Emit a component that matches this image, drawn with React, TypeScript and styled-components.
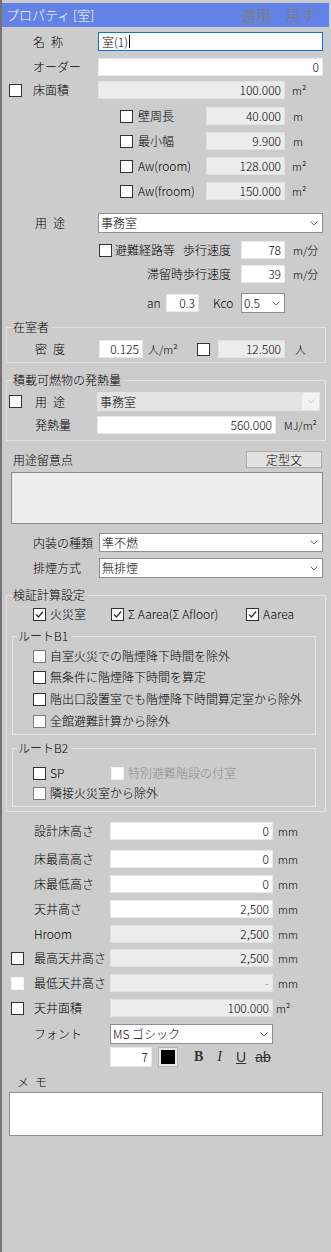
import styled, { createGlobalStyle } from "styled-components";

const GlobalStyle = createGlobalStyle`
  html, body {
    margin: 0;
    padding: 0;
    background: #cccccc;
  }
  body {
    font-family: "Noto Sans CJK JP", "Noto Sans", sans-serif;
    font-weight: 300;
    color: #000;
  }
`;

type FieldKind = "plain" | "readonly" | "focus";

function Chevron({ light }: { light?: boolean }) {
  return (
    <svg width="8" height="5" viewBox="0 0 8 5">
      <polyline
        points="0.5,0.5 4,4 7.5,0.5"
        fill="none"
        stroke={light ? "#c8c8c8" : "#707070"}
        strokeWidth="1"
      />
    </svg>
  );
}

function Check({ checked, disabled, dim }: { checked?: boolean; disabled?: boolean; dim?: boolean }) {
  return (
    <Box $disabled={disabled} $dim={dim}>
      {checked && (
        <svg width="11" height="11" viewBox="0 0 11 11">
          <polyline points="2,5.5 4.5,8 9,2.5" fill="none" stroke="#333" strokeWidth="1.4" />
        </svg>
      )}
    </Box>
  );
}

function Dropdown({ w, value, disabled }: { w: number; value: string; disabled?: boolean }) {
  return (
    <Select $w={w} $disabled={disabled}>
      <SelectText>{value}</SelectText>
      <Arrow $disabled={disabled}>
        <Chevron light={disabled} />
      </Arrow>
    </Select>
  );
}

function App() {
  return (
    <>
      <GlobalStyle />
      <Panel>
        <TitleBar>
          <Title>プロパティ [室]</Title>
          <Action>適用</Action>
          <Action>戻す</Action>
        </TitleBar>

        <Row $h={19} $mt={5} $indent={7}>
          <Lead $w={24} />
          <Label $w={65}>名{"\u2002"}称</Label>
          <Field $w={225} $kind="focus" $left>
            室(1)
            <Caret />
          </Field>
        </Row>

        <Row $mt={7} $indent={7}>
          <Lead $w={24} />
          <Label $w={65}>オーダー</Label>
          <Field $w={225}>0</Field>
        </Row>

        <Row $mt={5} $indent={7}>
          <Lead $w={24}>
            <Check />
          </Lead>
          <Label $w={65}>床面積</Label>
          <Field $w={187} $kind="readonly">100.000</Field>
          <Unit $gap={7}>m²</Unit>
        </Row>

        <Row $mt={8} $indent={118}>
          <Lead $w={18}>
            <Check />
          </Lead>
          <Label $w={68}>壁周長</Label>
          <Field $w={79} $kind="readonly">40.000</Field>
          <Unit $gap={8}>m</Unit>
        </Row>
        <Row $mt={7} $indent={118}>
          <Lead $w={18}>
            <Check />
          </Lead>
          <Label $w={68}>最小幅</Label>
          <Field $w={79} $kind="readonly">9.900</Field>
          <Unit $gap={8}>m</Unit>
        </Row>
        <Row $mt={7} $indent={118}>
          <Lead $w={18}>
            <Check />
          </Lead>
          <Label $w={68}>Aw(room)</Label>
          <Field $w={79} $kind="readonly">128.000</Field>
          <Unit $gap={7}>m²</Unit>
        </Row>
        <Row $mt={7} $indent={118}>
          <Lead $w={18}>
            <Check />
          </Lead>
          <Label $w={68}>Aw(froom)</Label>
          <Field $w={79} $kind="readonly">150.000</Field>
          <Unit $gap={7}>m²</Unit>
        </Row>

        <Row $h={20} $mt={13} $indent={9}>
          <Lead $w={24} />
          <Label $w={63}>用{"\u2002"}途</Label>
          <Dropdown w={225} value="事務室" />
        </Row>

        <Row $mt={8} $indent={97}>
          <Lead $w={16}>
            <Check />
          </Lead>
          <Label $w={68}>避難経路等</Label>
          <Label $w={58}>歩行速度</Label>
          <Field $w={44}>78</Field>
          <Unit $gap={8}>m/分</Unit>
        </Row>
        <Row $mt={6} $indent={145}>
          <Label $w={94}>滞留時歩行速度</Label>
          <Field $w={44}>39</Field>
          <Unit $gap={8}>m/分</Unit>
        </Row>
        <Row $h={20} $mt={10} $indent={145}>
          <Label $w={19}>an</Label>
          <Field $w={33} $h={18}>0.3</Field>
          <Label $w={42} $pl={14}>Kco</Label>
          <Dropdown w={44} value="0.5" />
        </Row>

        <Group $mt={7} $ml={4} $w={320} $pt={6} $pb={4}>
          <Legend $ml={6}>在室者</Legend>
          <Row $indent={28}>
            <Label $w={64}>密{"\u2002"}度</Label>
            <Field $w={44}>0.125</Field>
            <Unit $gap={5} $w={49}>人/m²</Unit>
            <Check />
            <Field $w={67} $ml={8} $kind="readonly">12.500</Field>
            <Unit $gap={10}>人</Unit>
          </Row>
        </Group>

        <Group $mt={10} $ml={4} $w={320} $pt={5} $pb={6}>
          <Legend $ml={6}>積載可燃物の発熱量</Legend>
          <Row $h={19} $indent={2}>
            <Lead $w={26}>
              <Check />
            </Lead>
            <Label $w={62}>用{"\u2002"}途</Label>
            <Dropdown w={223} value="事務室" disabled />
          </Row>
          <Row $mt={5} $indent={2}>
            <Lead $w={26} />
            <Label $w={62}>発熱量</Label>
            <Field $w={179}>560.000</Field>
            <Unit $gap={8}>MJ/m²</Unit>
          </Row>
        </Group>

        <Row $h={17} $mt={10} $indent={11}>
          <Label $w={233}>用途留意点</Label>
          <PushButton>定型文</PushButton>
        </Row>
        <NoteArea $ml={9} $w={312} $h={52} $mt={4} $grey />

        <Row $h={19} $mt={9} $indent={31}>
          <Label $w={66}>内装の種類</Label>
          <Dropdown w={224} value="準不燃" />
        </Row>
        <Row $h={20} $mt={6} $indent={31}>
          <Label $w={66}>排煙方式</Label>
          <Dropdown w={224} value="無排煙" />
        </Row>

        <Group $mt={10} $ml={4} $w={320} $pt={5} $pb={4}>
          <Legend $ml={6}>検証計算設定</Legend>
          <Row $h={14} $indent={26}>
            <CheckItem $w={78}>
              <Check checked />
              <Label>火災室</Label>
            </CheckItem>
            <CheckItem $w={135}>
              <Check checked />
              <Label>Σ Aarea(Σ Afloor)</Label>
            </CheckItem>
            <CheckItem>
              <Check checked />
              <Label>Aarea</Label>
            </CheckItem>
          </Row>

          <Group $mt={8} $ml={5} $w={304} $pt={6} $pb={6}>
            <Legend $ml={5}>ルートB1</Legend>
            <Row $h={14} $indent={20}>
              <CheckItem>
                <Check dim />
                <Label>自室火災での階煙降下時間を除外</Label>
              </CheckItem>
            </Row>
            <Row $h={14} $mt={7} $indent={20}>
              <CheckItem>
                <Check />
                <Label>無条件に階煙降下時間を算定</Label>
              </CheckItem>
            </Row>
            <Row $h={14} $mt={8} $indent={20}>
              <CheckItem>
                <Check />
                <Label>階出口設置室でも階煙降下時間算定室から除外</Label>
              </CheckItem>
            </Row>
            <Row $h={14} $mt={8} $indent={20}>
              <CheckItem>
                <Check dim />
                <Label>全館避難計算から除外</Label>
              </CheckItem>
            </Row>
          </Group>

          <Group $mt={6} $ml={5} $w={304} $pt={11} $pb={6}>
            <Legend $ml={5}>ルートB2</Legend>
            <Row $h={14} $indent={20}>
              <CheckItem $w={78}>
                <Check />
                <Label>SP</Label>
              </CheckItem>
              <CheckItem>
                <Check disabled />
                <Label $muted>特別避難階段の付室</Label>
              </CheckItem>
            </Row>
            <Row $h={14} $mt={6} $indent={20}>
              <CheckItem>
                <Check dim />
                <Label>隣接火災室から除外</Label>
              </CheckItem>
            </Row>
          </Group>
        </Group>

        <Row $mt={10} $indent={9}>
          <Lead $w={23} />
          <Label $w={76}>設計床高さ</Label>
          <Field $w={163}>0</Field>
          <Unit $gap={5}>mm</Unit>
        </Row>
        <Row $mt={10} $indent={9}>
          <Lead $w={23} />
          <Label $w={76}>床最高高さ</Label>
          <Field $w={163}>0</Field>
          <Unit $gap={5}>mm</Unit>
        </Row>
        <Row $mt={7} $indent={9}>
          <Lead $w={23} />
          <Label $w={76}>床最低高さ</Label>
          <Field $w={163}>0</Field>
          <Unit $gap={5}>mm</Unit>
        </Row>
        <Row $mt={7} $indent={9}>
          <Lead $w={23} />
          <Label $w={76}>天井高さ</Label>
          <Field $w={163}>2,500</Field>
          <Unit $gap={5}>mm</Unit>
        </Row>
        <Row $mt={7} $indent={9}>
          <Lead $w={23} />
          <Label $w={76}>Hroom</Label>
          <Field $w={163} $kind="readonly">2,500</Field>
          <Unit $gap={5}>mm</Unit>
        </Row>
        <Row $mt={6} $indent={9}>
          <Lead $w={23}>
            <Check />
          </Lead>
          <Label $w={76}>最高天井高さ</Label>
          <Field $w={163} $kind="readonly">2,500</Field>
          <Unit $gap={5}>mm</Unit>
        </Row>
        <Row $mt={7} $indent={9}>
          <Lead $w={23}>
            <Check disabled />
          </Lead>
          <Label $w={76}>最低天井高さ</Label>
          <Field $w={163} $kind="readonly" $muted>
            -
          </Field>
          <Unit $gap={5}>mm</Unit>
        </Row>
        <Row $mt={7} $indent={9}>
          <Lead $w={23}>
            <Check />
          </Lead>
          <Label $w={76}>天井面積</Label>
          <Field $w={163} $kind="readonly">100.000</Field>
          <Unit $gap={3}>m²</Unit>
        </Row>
        <Row $h={20} $mt={7} $indent={9}>
          <Lead $w={23} />
          <Label $w={76}>フォント</Label>
          <Dropdown w={163} value="MS ゴシック" />
        </Row>
        <Row $h={20} $mt={3} $indent={108}>
          <Field $w={42}>7</Field>
          <Swatch>
            <SwatchInner />
          </Swatch>
          <ToolGlyph $ml={16} $bold $serif>
            B
          </ToolGlyph>
          <ToolGlyph $ml={14} $italic $serif>
            I
          </ToolGlyph>
          <ToolGlyph $ml={14} $underline>
            U
          </ToolGlyph>
          <ToolGlyph $ml={9} $strike>
            ab
          </ToolGlyph>
        </Row>

        <Row $h={14} $mt={8} $indent={15}>
          <Label>メ{"\u2002"}モ</Label>
        </Row>
        <NoteArea $ml={7} $w={314} $h={44} $mt={3} />
      </Panel>
    </>
  );
}

export default App;

const Panel = styled.div`
  width: 331px;
  height: 1252px;
  box-sizing: border-box;
  padding-top: 3px;
  background: #cccccc;
  border-left: 2px solid #747474;
  overflow: hidden;
`;

const TitleBar = styled.div`
  display: flex;
  align-items: center;
  height: 24px;
  margin-right: 2px;
  padding: 0 13px 0 4px;
  background: #6282e8;
`;

const Title = styled.span`
  flex: 1;
  color: #fff;
  font-size: 13px;
  line-height: 16px;
`;

const Action = styled.span`
  margin-left: 15px;
  color: #857b57;
  font-size: 15px;
  line-height: 18px;
`;

const Row = styled.div<{ $h?: number; $mt?: number; $indent?: number }>`
  display: flex;
  align-items: center;
  height: ${(p) => p.$h ?? 18}px;
  margin-top: ${(p) => p.$mt ?? 0}px;
  padding-left: ${(p) => p.$indent ?? 0}px;
`;

const Lead = styled.div<{ $w: number }>`
  flex: none;
  display: flex;
  align-items: center;
  width: ${(p) => p.$w}px;
`;

const Label = styled.span<{ $w?: number; $pl?: number; $muted?: boolean }>`
  flex: none;
  box-sizing: border-box;
  width: ${(p) => (p.$w ? `${p.$w}px` : "auto")};
  padding-left: ${(p) => p.$pl ?? 0}px;
  font-size: 12px;
  line-height: 14px;
  white-space: nowrap;
  color: ${(p) => (p.$muted ? "#8c8c8c" : "#000")};
`;

const fieldBorder: Record<FieldKind, string> = {
  plain: "#e9e9e9",
  readonly: "#e2e2e2",
  focus: "#0a74d6",
};

const Field = styled.div<{
  $w: number;
  $h?: number;
  $ml?: number;
  $kind?: FieldKind;
  $left?: boolean;
  $muted?: boolean;
}>`
  flex: none;
  box-sizing: border-box;
  display: flex;
  align-items: center;
  justify-content: ${(p) => (p.$left ? "flex-start" : "flex-end")};
  width: ${(p) => p.$w}px;
  height: ${(p) => (p.$h ? `${p.$h}px` : "100%")};
  margin-left: ${(p) => p.$ml ?? 0}px;
  padding: 0 3px;
  font-size: 12px;
  line-height: 14px;
  white-space: nowrap;
  color: ${(p) => (p.$muted ? "#8c8c8c" : "#000")};
  background: ${(p) => (p.$kind === "readonly" ? "#ececec" : "#fff")};
  border: 1px solid ${(p) => fieldBorder[p.$kind ?? "plain"]};
`;

const Caret = styled.span`
  width: 1px;
  height: 13px;
  margin-left: 1px;
  background: #000;
`;

const Unit = styled.span<{ $gap: number; $w?: number }>`
  flex: none;
  width: ${(p) => (p.$w ? `${p.$w}px` : "auto")};
  margin-left: ${(p) => p.$gap}px;
  font-size: 11px;
  line-height: 14px;
  white-space: nowrap;
`;

const Box = styled.span<{ $disabled?: boolean; $dim?: boolean }>`
  flex: none;
  box-sizing: border-box;
  display: flex;
  align-items: center;
  justify-content: center;
  width: 13px;
  height: 13px;
  background: #fff;
  border: 1px solid ${(p) => (p.$disabled ? "#f3f3f3" : p.$dim ? "#7a7a7a" : "#333")};
`;

const CheckItem = styled.div<{ $w?: number }>`
  flex: none;
  display: flex;
  align-items: center;
  gap: 4px;
  width: ${(p) => (p.$w ? `${p.$w}px` : "auto")};
`;

const Select = styled.div<{ $w: number; $disabled?: boolean }>`
  flex: none;
  box-sizing: border-box;
  display: flex;
  align-items: center;
  width: ${(p) => p.$w}px;
  height: 100%;
  background: ${(p) => (p.$disabled ? "#e3e3e3" : "#fff")};
  border: 1px solid ${(p) => (p.$disabled ? "#e3e3e3" : "#8f8f8f")};
  font-size: 12px;
  line-height: 14px;
`;

const SelectText = styled.span`
  flex: 1;
  padding-left: 2px;
  white-space: nowrap;
`;

const Arrow = styled.span<{ $disabled?: boolean }>`
  flex: none;
  display: flex;
  align-items: center;
  justify-content: center;
  width: 17px;
  height: 100%;
  background: ${(p) => (p.$disabled ? "#f3f3f3" : "transparent")};
`;

const Group = styled.fieldset<{ $mt: number; $ml: number; $w: number; $pt: number; $pb: number }>`
  box-sizing: border-box;
  width: ${(p) => p.$w}px;
  min-width: 0;
  margin: ${(p) => p.$mt}px 0 0 ${(p) => p.$ml}px;
  padding: ${(p) => p.$pt}px 0 ${(p) => p.$pb}px 0;
  border: 1px solid #e2e2e2;
`;

const Legend = styled.legend<{ $ml: number }>`
  margin-left: ${(p) => p.$ml}px;
  padding: 0 3px 0 0;
  font-size: 12px;
  line-height: 14px;
`;

const PushButton = styled.div`
  flex: none;
  box-sizing: border-box;
  display: flex;
  align-items: center;
  justify-content: center;
  width: 76px;
  height: 100%;
  background: #e1e1e1;
  border: 1px solid #adadad;
  font-size: 12px;
`;

const NoteArea = styled.div<{ $ml: number; $w: number; $h: number; $mt: number; $grey?: boolean }>`
  box-sizing: border-box;
  width: ${(p) => p.$w}px;
  height: ${(p) => p.$h}px;
  margin: ${(p) => p.$mt}px 0 0 ${(p) => p.$ml}px;
  background: ${(p) => (p.$grey ? "#ececec" : "#fff")};
  border: 1px solid #8c8c8c;
`;

const Swatch = styled.div`
  flex: none;
  box-sizing: border-box;
  display: flex;
  align-items: center;
  justify-content: center;
  width: 20px;
  height: 20px;
  margin-left: 6px;
  background: #e6e6e6;
  border: 1px solid #b4b4b4;
`;

const SwatchInner = styled.div`
  width: 14px;
  height: 14px;
  background: #000;
`;

const ToolGlyph = styled.span<{
  $ml: number;
  $bold?: boolean;
  $italic?: boolean;
  $underline?: boolean;
  $strike?: boolean;
  $serif?: boolean;
}>`
  flex: none;
  margin-left: ${(p) => p.$ml}px;
  font-family: ${(p) => (p.$serif ? '"Liberation Serif", serif' : '"Liberation Sans", sans-serif')};
  font-size: 14px;
  line-height: 16px;
  color: #333;
  font-weight: ${(p) => (p.$bold ? 700 : 400)};
  font-style: ${(p) => (p.$italic ? "italic" : "normal")};
  text-decoration: ${(p) => (p.$underline ? "underline" : p.$strike ? "line-through" : "none")};
`;
